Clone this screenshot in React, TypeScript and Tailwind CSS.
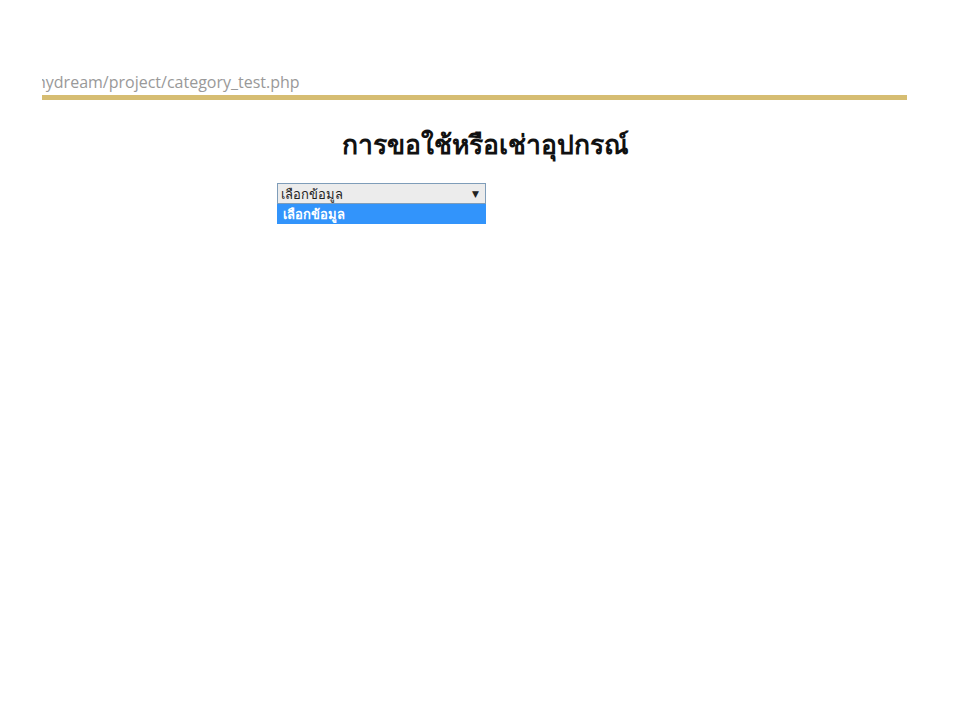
export default function App() {
  return (
    <div className="w-[960px] h-[720px] bg-white relative overflow-hidden" style={{ fontFamily: '"Open Sans", "Noto Sans", "DejaVu Sans", sans-serif' }}>
      <div className="pt-[71px] pl-[42px] w-[907px]">
        <div className="overflow-hidden h-[24px] w-[300px]">
          <div className="-ml-[11px] text-[16px] leading-[22px] text-[#999] whitespace-nowrap">mydream/project/category_test.php</div>
        </div>
        <div className="h-[5px] bg-[#d6bd72] w-[865px]" />
      </div>
      <h1 className="mt-[28px] text-center text-[26.5px] font-bold text-[#111] leading-[32px] ml-[10px]" style={{ fontFamily: 'Tahoma, "Noto Sans", "DejaVu Sans", sans-serif' }}>
        การขอใช้หรือเช่าอุปกรณ์
      </h1>
      <div className="ml-[277px] mt-[23px] w-[209px]">
        <div className="h-[21px] border border-[#7f9db9] bg-[#ececec] flex items-center justify-between pl-[3px] pr-[6px] text-[13px] text-[#222]">
          <span className="leading-[18px]">เลือกข้อมูล</span>
          <span className="text-[9px] text-[#222]">▼</span>
        </div>
        <div className="h-[20px] bg-[#3294fb] text-white text-[13px] font-semibold pl-[6px] leading-[20px]">
          เลือกข้อมูล
        </div>
      </div>
    </div>
  );
}
